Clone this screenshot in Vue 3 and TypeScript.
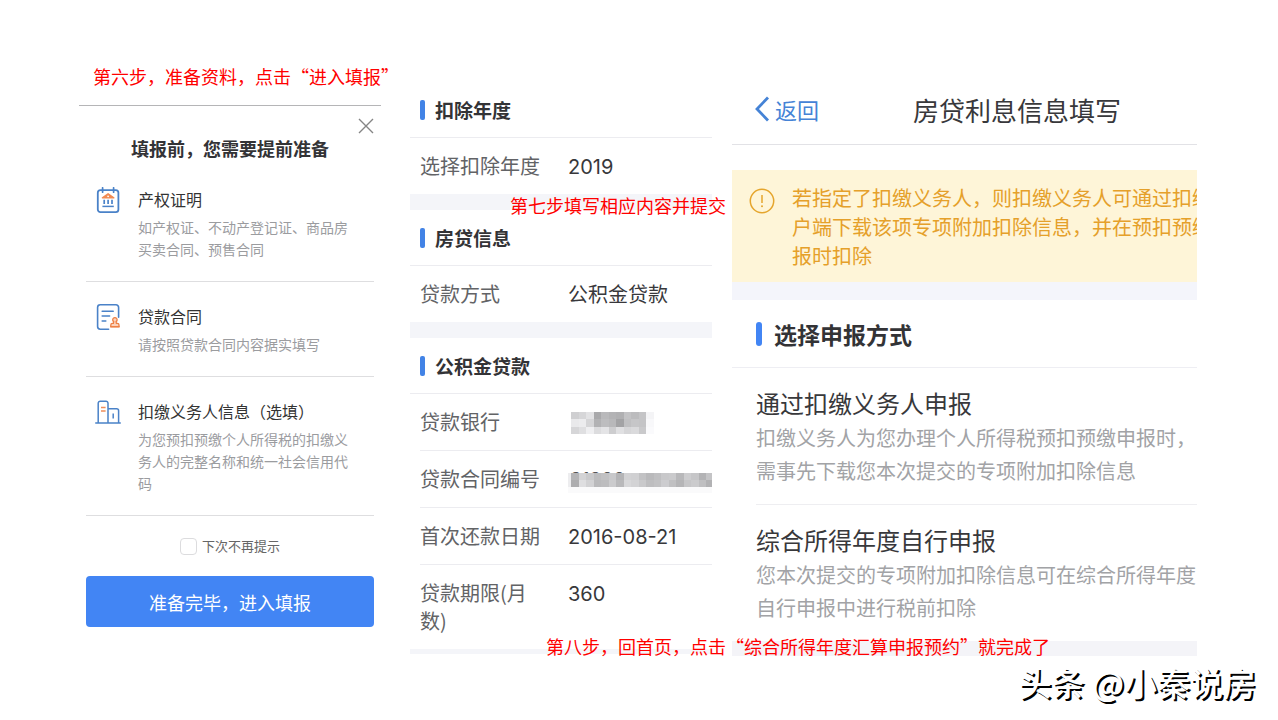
<script setup lang="ts">
import { ref } from 'vue'

interface Material { icon: string; title: string; lines: string }
interface Row { label: string; value?: string; mask?: string; numeric?: boolean }
interface Section { title: string; rows: Row[]; note?: string }
interface Option { title: string; lines: string[] }

const skipNext = ref(false)

const materials: Material[] = [
  { icon: 'deed', title: '产权证明', lines: '如产权证、不动产登记证、商品房买卖合同、预售合同' },
  { icon: 'contract', title: '贷款合同', lines: '请按照贷款合同内容据实填写' },
  { icon: 'company', title: '扣缴义务人信息（选填）', lines: '为您预扣预缴个人所得税的扣缴义务人的完整名称和统一社会信用代码' },
]

const sections: Section[] = [
  { title: '扣除年度', rows: [{ label: '选择扣除年度', value: '2019', numeric: true }], note: '第七步填写相应内容并提交' },
  { title: '房贷信息', rows: [{ label: '贷款方式', value: '公积金贷款' }] },
  {
    title: '公积金贷款',
    rows: [
      { label: '贷款银行', mask: 'bank' },
      { label: '贷款合同编号', mask: 'number' },
      { label: '首次还款日期', value: '2016-08-21', numeric: true },
      { label: '贷款期限(月数)', value: '360', numeric: true },
    ],
    note: '第八步，回首页，点击“综合所得年度汇算申报预约”就完成了',
  },
]

const notice: string[] = [
  '若指定了扣缴义务人，则扣缴义务人可通过扣缴',
  '户端下载该项专项附加扣除信息，并在预扣预缴',
  '报时扣除',
]

const options: Option[] = [
  { title: '通过扣缴义务人申报', lines: ['扣缴义务人为您办理个人所得税预扣预缴申报时，', '需事先下载您本次提交的专项附加扣除信息'] },
  { title: '综合所得年度自行申报', lines: ['您本次提交的专项附加扣除信息可在综合所得年度', '自行申报中进行税前扣除'] },
]

const bankMosaic: string[][] = [
  ['#cfcfd1', '#d6d6d8', '#e2e2e4', '#a9a9ab', '#b9b9bb', '#b3b3b5', '#b0b0b2', '#c3c3c5', '#bcbcbe', '#c4c4c6', '#f4f4f6'],
  ['#e9e9eb', '#ececee', '#d5d5d7', '#b2b2b4', '#bdbdbf', '#b8b8ba', '#a3a3a5', '#c0c0c2', '#c6c6c8', '#c4c4c6', '#f8f8fa'],
  ['#d6d6d8', '#dfdfe1', '#efeff1', '#dcdcde', '#e4e4e6', '#cdcdcf', '#e0e0e2', '#d6d6d8', '#dadadc', '#c9c9cb', '#fafafc'],
]
const numberMosaic: string[][] = [
  ['#b4b4b6', '#d3d3d5', '#c9c9cb', '#bcbcbe', '#c1c1c3', '#c8c8ca', '#b4b4b6', '#d2d2d4', '#d0d0d2', '#c2c2c4', '#b9b9bb', '#bfbfc1', '#c8c8ca', '#cacacc', '#b8b8ba', '#cdcdcf', '#c6c6c8', '#b3b3b5', '#c4c4c6', '#cecece'],
  ['#adadaf', '#dedee0', '#d2d2d4', '#bababc', '#bdbdbf', '#cbcbcd', '#b9b9bb', '#d8d8da', '#d3d3d5', '#c9c9cb', '#bebec0', '#c2c2c4', '#cccccf', '#c0c0c2', '#b5b5b7', '#c6c6c8', '#cbcbcd', '#bfbfc1', '#b2b2b4', '#b6b6b8'],
]
</script>

<template>
  <main class="page">
    <div class="columns">
      <section class="prepare">
        <p class="step">第六步，准备资料，点击“进入填报”</p>
        <div class="dialog">
          <button class="close" type="button" aria-label="关闭">
            <svg width="16" height="16" viewBox="0 0 16 16"><path d="M1 1L15 15M15 1L1 15" stroke="#858585" stroke-width="1.4" fill="none" /></svg>
          </button>
          <h2 class="dialog-title">填报前，您需要提前准备</h2>
          <ul class="materials">
            <li v-for="m in materials" :key="m.title" class="material">
              <svg v-if="m.icon === 'deed'" class="icon" width="26" height="28" viewBox="0 0 26 28" fill="none">
                <rect x="2.8" y="3.2" width="20.6" height="22" rx="2.6" stroke="#4a82c8" stroke-width="1.8" />
                <path d="M7.6 0.8V5.2M18.6 0.8V5.2" stroke="#4a82c8" stroke-width="1.7" stroke-linecap="round" />
                <path d="M7.4 10.8L13.1 6.8L18.8 10.8Z" fill="#f08a52" stroke="#f08a52" stroke-width="1.4" stroke-linejoin="round" />
                <circle cx="13.1" cy="9.3" r="0.9" fill="#fff" />
                <path d="M9.2 12.8V17M13.1 12.8V17M17 12.8V17" stroke="#4a82c8" stroke-width="1.7" />
                <path d="M7.4 19.4H18.8" stroke="#4a82c8" stroke-width="1.5" />
              </svg>
              <svg v-else-if="m.icon === 'contract'" class="icon" width="26" height="28" viewBox="0 0 26 28" fill="none">
                <path d="M13.6 25.2H5.2A2.6 2.6 0 0 1 2.6 22.6V3.4A2.6 2.6 0 0 1 5.2 .8H21A2.6 2.6 0 0 1 23.6 3.4V13.2" stroke="#4a82c8" stroke-width="1.6" stroke-linecap="round" />
                <path d="M7.2 7.2H18.2M7.2 12H14.6M7.2 17H10.8" stroke="#4a82c8" stroke-width="1.6" stroke-linecap="round" />
                <path d="M18.4 19.4L18.7 17.6A2.2 2.2 0 1 1 21.1 17.6L21.4 19.4H22.4A1.6 1.6 0 0 1 24 21V22.6H15.8V21A1.6 1.6 0 0 1 17.4 19.4Z" fill="#fbd3bd" stroke="#ee8146" stroke-width="1.3" />
                <path d="M15.8 22.8H24" stroke="#ee8146" stroke-width="1.5" stroke-linecap="round" />
              </svg>
              <svg v-else class="icon" width="26" height="28" viewBox="0 0 26 28" fill="none">
                <path d="M.8 24H25.2" stroke="#4a82c8" stroke-width="1.6" stroke-linecap="round" />
                <path d="M3.2 24V4.2A2 2 0 0 1 5.2 2.2H11A2 2 0 0 1 13 4.2V24M13 9.8H21.6A2 2 0 0 1 23.6 11.8V24" stroke="#4a82c8" stroke-width="1.5" />
                <path d="M6 8.6H10.6M6 12H10.6" stroke="#ee8d5a" stroke-width="1.5" />
                <path d="M18.2 14.4V19.6" stroke="#4a82c8" stroke-width="1.5" />
              </svg>
              <div class="material-text">
                <h3>{{ m.title }}</h3>
                <p>{{ m.lines }}</p>
              </div>
            </li>
          </ul>
          <label class="skip"><input v-model="skipNext" type="checkbox" />下次不再提示</label>
          <button class="primary" type="button">准备完毕，进入填报</button>
        </div>
      </section>

      <section class="loan">
        <div v-for="s in sections" :key="s.title" class="group">
          <h2 class="group-title">{{ s.title }}</h2>
          <dl class="rows">
            <div v-for="r in s.rows" :key="r.label" class="row">
              <dt>{{ r.label }}</dt>
              <dd :class="{ numeric: r.numeric }">
                <template v-if="r.value">{{ r.value }}</template>
                <svg v-else-if="r.mask === 'bank'" class="mask" width="90" height="28" viewBox="0 0 90 28" shape-rendering="crispEdges">
                  <g v-for="(line, y) in bankMosaic" :key="y">
                    <rect v-for="(c, x) in line" :key="x" :x="3 + x * 7.5" :y="4 + y * 7.4" width="7.5" height="7.4" :fill="c" />
                  </g>
                </svg>
                <svg v-else class="mask" width="144" height="28" viewBox="0 0 144 28">
                  <text x="2" y="21" class="mask-text">31300</text>
                  <g shape-rendering="crispEdges">
                    <rect x="0" y="8" width="3" height="14" fill="#ededef" />
                    <g v-for="(line, y) in numberMosaic" :key="y">
                      <rect v-for="(c, x) in line" :key="x" :x="3 + x * 7.5" :y="8 + y * 7" width="7.5" height="7" :fill="c" />
                    </g>
                    <rect x="0" y="22" width="144" height="6" fill="#fafafb" />
                  </g>
                </svg>
              </dd>
            </div>
          </dl>
          <div class="band"><p v-if="s.note" class="step note">{{ s.note }}</p></div>
        </div>
      </section>

      <section class="declare">
        <header class="bar">
          <a class="back" href="#">
            <svg width="16" height="26" viewBox="0 0 16 26"><path d="M14 1.5L3 13L14 24.5" stroke="#4583d6" stroke-width="2.8" fill="none" /></svg>
            <span>返回</span>
          </a>
          <h1>房贷利息信息填写</h1>
        </header>
        <div class="notice">
          <svg class="notice-icon" width="26" height="26" viewBox="0 0 26 26" fill="none">
            <circle cx="13" cy="13" r="11.7" stroke="#e5a52c" stroke-width="1.5" />
            <path d="M13 7V15" stroke="#e5a52c" stroke-width="1.5" />
            <circle cx="13" cy="18.2" r="1" fill="#e5a52c" />
          </svg>
          <p><span v-for="l in notice" :key="l">{{ l }}</span></p>
        </div>
        <div class="gap"></div>
        <h2 class="declare-title">选择申报方式</h2>
        <div class="options">
          <button v-for="o in options" :key="o.title" class="option" type="button">
            <strong>{{ o.title }}</strong>
            <span v-for="l in o.lines" :key="l">{{ l }}</span>
          </button>
        </div>
        <div class="end"></div>
      </section>
    </div>
    <footer class="credit">头条 @小秦说房</footer>
  </main>
</template>

<style>
body {
  margin: 0;
  background: #fff;
}
</style>

<style scoped>
.page {
  padding-top: 64px;
  font-family: "Noto Sans CJK SC", "Noto Sans", sans-serif;
  color: #333;
}
h1, h2, h3, p, ul, dl, dd {
  margin: 0;
  padding: 0;
}
ul {
  list-style: none;
}
button {
  font-family: inherit;
  border: 0;
  background: none;
  padding: 0;
  cursor: pointer;
}
.columns {
  display: flex;
  align-items: flex-start;
  padding: 0 81px 0 79px;
}
.step {
  font-size: 18px;
  line-height: 24px;
  color: #f00;
  white-space: nowrap;
}

/* Preparation dialog */
.prepare {
  flex: 302 1 0;
  min-width: 0;
  margin-right: 29px;
}
.prepare > .step {
  padding-left: 14px;
}
.dialog {
  display: flex;
  flex-direction: column;
  margin-top: 17px;
  padding: 12px 7px 0;
  border-top: 1px solid #b5b5b7;
}
.close {
  align-self: flex-end;
  height: 16px;
}
.close svg {
  display: block;
}
.dialog-title {
  margin: 2px 0 5px;
  font-size: 18px;
  line-height: 24px;
  font-weight: 700;
  text-align: center;
  color: #333336;
}
.material {
  display: flex;
  gap: 17px;
  padding: 22px 20px 21px 9px;
  border-bottom: 1px solid #dedee0;
}
.icon {
  flex: none;
}
.material h3 {
  font-size: 16px;
  line-height: 24px;
  font-weight: 400;
  color: #333;
}
.material p {
  margin-top: 5px;
  font-size: 14px;
  line-height: 22px;
  color: #9b9c9f;
}
.skip {
  display: flex;
  justify-content: center;
  align-items: center;
  gap: 5px;
  margin-top: 21px;
  font-size: 13px;
  line-height: 18px;
  color: #666;
}
.skip input {
  appearance: none;
  width: 17px;
  height: 17px;
  margin: 0;
  border: 1px solid #dcdcde;
  border-radius: 4px;
  background: #fff;
}
.skip input:checked {
  background: #4285f4;
}
.primary {
  height: 51px;
  margin-top: 21px;
  border-radius: 4px;
  background: #4285f4;
  color: #fff;
  font-size: 18px;
}

/* Loan form */
.loan {
  flex: 302 1 0;
  min-width: 0;
  margin: 18px 20px 0 0;
}
.group-title {
  display: flex;
  align-items: center;
  gap: 10px;
  height: 55px;
  padding-left: 10px;
  border-bottom: 1px solid #ececf0;
  font-size: 19px;
  line-height: 28px;
  font-weight: 700;
  color: #333336;
}
.group-title::before {
  content: "";
  width: 5px;
  height: 20px;
  border-radius: 2px;
  background: #4283e6;
}
.rows {
  padding-left: 10px;
}
.row {
  display: flex;
  padding: 14px 0;
  font-size: 20px;
  line-height: 28px;
}
.row + .row {
  border-top: 1px solid #ececf0;
}
.row dt {
  flex: none;
  width: 120px;
  margin-right: 28px;
  color: #626366;
}
.row dd {
  min-width: 0;
  flex: 1;
  height: 28px;
  color: #38383b;
}
.row .numeric {
  font-family: Inter, "Noto Sans CJK SC", sans-serif;
  line-height: 30px;
}
.mask {
  display: block;
  max-width: 100%;
}
.mask-text {
  font-family: Inter, sans-serif;
  font-size: 19px;
  fill: #555;
}
.band {
  position: relative;
  height: 16px;
  background: #f4f5f9;
}
.group:last-child .band {
  height: 5px;
}
.note {
  position: absolute;
  z-index: 1;
  left: 100px;
  top: -1px;
}
.group:last-child .note {
  left: 136px;
  top: -15px;
}

/* Declaration screen */
.declare {
  flex: 465 1 0;
  min-width: 0;
  margin-top: 14px;
  overflow: hidden;
}
.bar {
  display: flex;
  align-items: center;
  gap: 94px;
  height: 62px;
  padding: 0 0 4px 22px;
  border-bottom: 1px solid #e2e2e6;
  white-space: nowrap;
}
.back {
  display: flex;
  align-items: center;
  gap: 5px;
  font-size: 22px;
  color: #4583d6;
  text-decoration: none;
}
.bar h1 {
  font-size: 26px;
  font-weight: 400;
  color: #38383b;
}
.notice {
  display: flex;
  gap: 17px;
  margin-top: 25px;
  padding: 13px 0 12px 17px;
  background: #fef5d8;
  color: #e5a02a;
  font-size: 20px;
  line-height: 29px;
}
.notice-icon {
  flex: none;
  margin-top: 5px;
}
.notice span {
  display: block;
  white-space: nowrap;
}
.gap {
  height: 18px;
  background: #f4f5fb;
}
.declare-title {
  display: flex;
  align-items: center;
  gap: 12px;
  height: 67px;
  padding-left: 24px;
  border-bottom: 1px solid #eeeef3;
  font-size: 23px;
  font-weight: 700;
  color: #333336;
}
.declare-title::before {
  content: "";
  width: 6px;
  height: 24px;
  border-radius: 3px;
  background: #4285f4;
}
.options {
  padding-left: 24px;
}
.option {
  display: block;
  width: 100%;
  padding: 17px 0;
  text-align: left;
  white-space: nowrap;
}
.option + .option {
  border-top: 1px solid #eeeef1;
}
.option strong {
  display: block;
  font-size: 24px;
  line-height: 36px;
  font-weight: 400;
  color: #38383b;
}
.option span {
  display: block;
  font-size: 20px;
  line-height: 33px;
  color: #a2a3a6;
}
.end {
  height: 15px;
  background: #f4f4f8;
}
.credit {
  padding: 2px 22px 0 0;
  font-size: 33px;
  line-height: 48px;
  font-weight: 500;
  text-align: right;
  color: #fff;
  text-shadow: 2px 2px 0 #000;
}
</style>
